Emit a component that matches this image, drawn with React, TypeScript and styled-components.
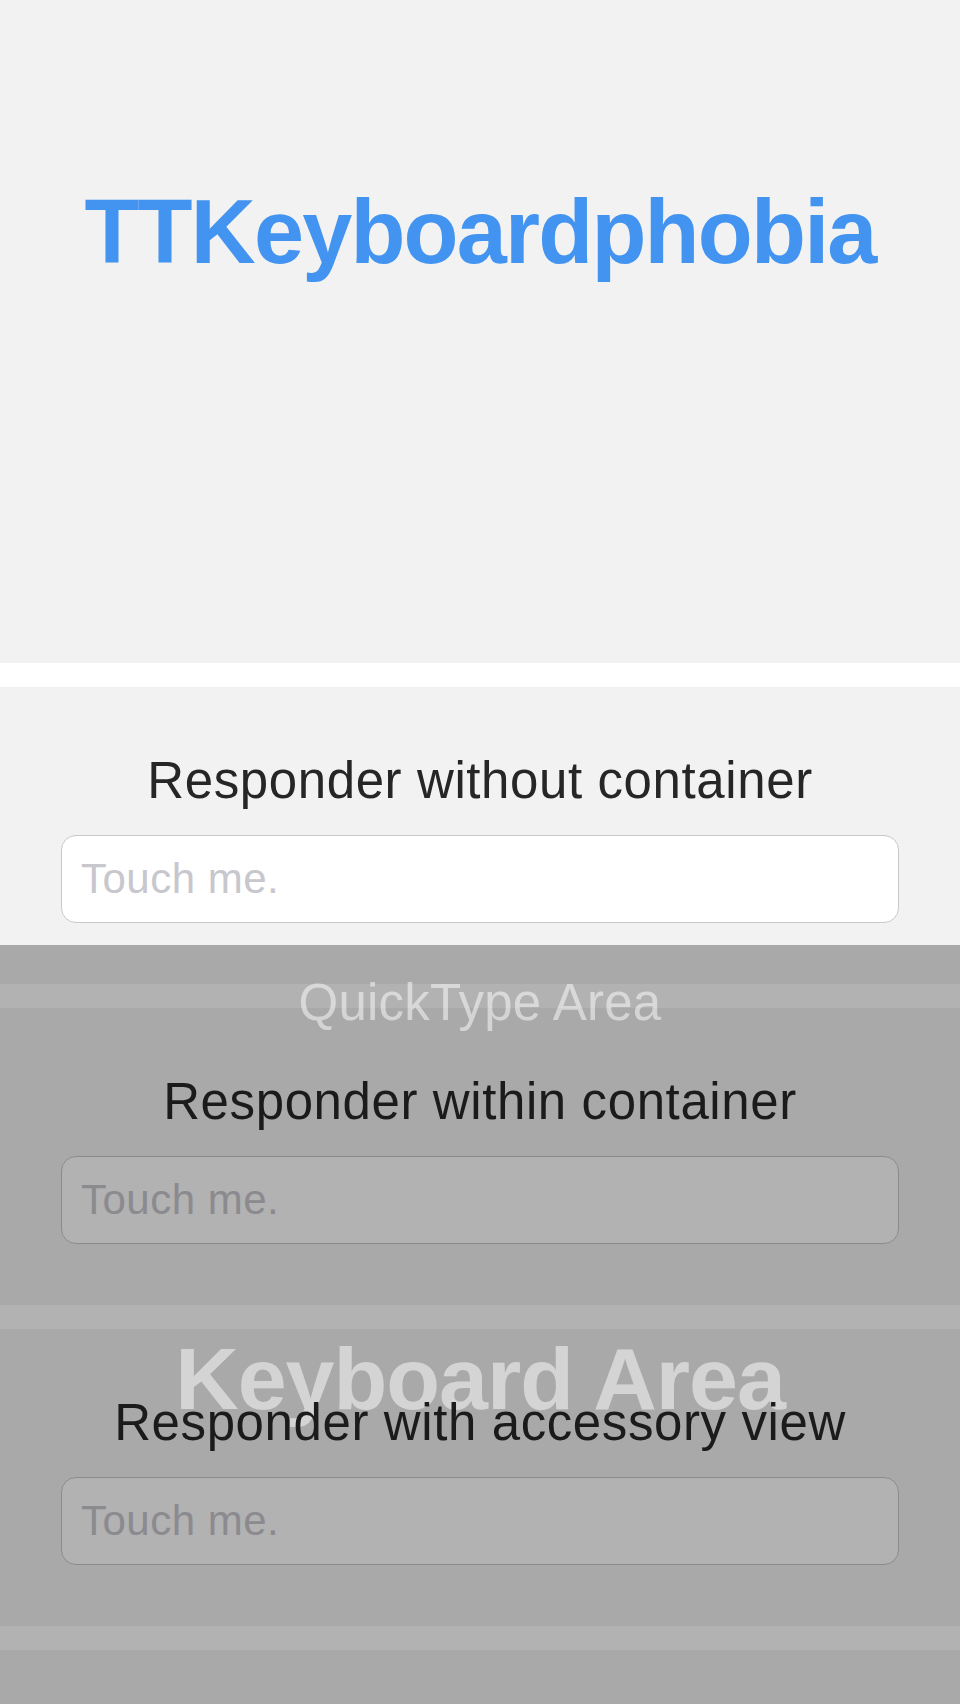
import { type FC } from 'react'
import styled, { createGlobalStyle } from 'styled-components'

const GlobalStyle = createGlobalStyle`
  html, body {
    margin: 0;
    padding: 0;
    background: #f2f2f2;
  }
  * {
    box-sizing: border-box;
  }
`

const sections = [
  { title: 'Responder without container', covered: false },
  { title: 'Responder within container', covered: true },
  { title: 'Responder with accessory view', covered: true }
]

const App: FC = () => {
  return (
    <Page>
      <GlobalStyle />
      <Header>
        <Title>TTKeyboardphobia</Title>
      </Header>
      {sections.map((section) => (
        <div key={section.title}>
          <Separator />
          <Section>
            <Label $covered={section.covered}>{section.title}</Label>
            <Field placeholder="Touch me." />
          </Section>
        </div>
      ))}
      <Separator />
      <Filler />
      <Keyboard>
        <QuickType>QuickType Area</QuickType>
        <KeyboardTitle>Keyboard Area</KeyboardTitle>
      </Keyboard>
    </Page>
  )
}

const Page = styled.div`
  position: relative;
  width: 960px;
  min-height: 1704px;
  background: #f2f2f2;
  font-family: 'Liberation Sans', Arial, sans-serif;
  overflow: hidden;
`
const Header = styled.header`
  height: 663px;
  padding-top: 187px;
  display: flex;
  justify-content: center;
  align-items: flex-start;
`
const Title = styled.h1`
  margin: 0;
  font-size: 90px;
  line-height: 1;
  font-weight: 700;
  letter-spacing: -1.8px;
  color: #4394f0;
`
const Separator = styled.div`
  height: 24px;
  background: #ffffff;
`
const Section = styled.section`
  height: 297px;
  padding: 68px 61px 0;
  display: flex;
  flex-direction: column;
  align-items: stretch;
`
const Label = styled.div<{ $covered: boolean }>`
  position: relative;
  z-index: ${({ $covered }) => ($covered ? 3 : 'auto')};
  font-size: 51px;
  line-height: 1;
  letter-spacing: 0.6px;
  text-align: center;
  color: ${({ $covered }) => ($covered ? '#1b1b1b' : '#262626')};
  margin-bottom: 29px;
`
const Field = styled.input`
  height: 88px;
  width: 100%;
  border: 1px solid #c8c8c8;
  border-radius: 15px;
  background: #ffffff;
  padding: 0 19px;
  font-family: 'Liberation Sans', Arial, sans-serif;
  font-size: 42px;
  letter-spacing: 0.5px;
  color: #262626;
  outline: none;
  &::placeholder {
    color: #c7c7cd;
  }
`
const Filler = styled.div`
  height: 54px;
`
const Keyboard = styled.div`
  position: absolute;
  z-index: 2;
  left: 0;
  right: 0;
  top: 945px;
  bottom: 0;
  background: rgba(0, 0, 0, 0.3);
  display: flex;
  flex-direction: column;
  align-items: center;
  padding-top: 32px;
  pointer-events: none;
  color: rgba(255, 255, 255, 0.5);
`
const QuickType = styled.div`
  font-size: 51px;
  line-height: 1;
  letter-spacing: 0.2px;
`
const KeyboardTitle = styled.div`
  margin-top: 307px;
  font-size: 88px;
  line-height: 1;
  font-weight: 700;
  letter-spacing: -1px;
`

export default App
